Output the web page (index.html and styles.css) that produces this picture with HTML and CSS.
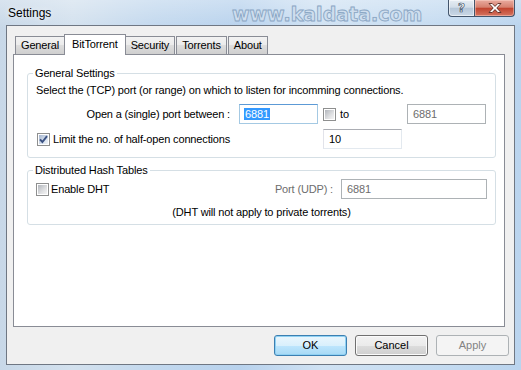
FILE: index.html
```html
<!DOCTYPE html>
<html lang="en">
<head>
<meta charset="UTF-8">
<meta name="viewport" content="width=device-width, initial-scale=1.0">
<link rel="stylesheet" href="styles.css">
<title>Settings</title>
</head>
<body>
  <div class="window">
    <div class="titlebar">
      <span class="title">Settings</span>
      <span class="watermark">www.kaldata.com</span>
      <div class="caption-buttons">
        <span class="cap-btn help">?</span>
        <span class="cap-btn close">
          <svg width="14" height="10" viewBox="0 0 14 10">
            <path d="M1 0.5h3.2L7 3.4 9.8 0.5H13L8.8 5 13 9.5H9.8L7 6.6 4.2 9.5H1L5.2 5Z" fill="#fff" stroke="#5a2a22" stroke-width="0.9" stroke-linejoin="round"/>
          </svg>
        </span>
      </div>
    </div>

    <div class="client">
      <div class="tabs">
        <div class="tab">General</div>
        <div class="tab active">BitTorrent</div>
        <div class="tab">Security</div>
        <div class="tab">Torrents</div>
        <div class="tab">About</div>
      </div>

      <div class="panel">
        <fieldset class="group">
          <legend>General Settings</legend>
          <p class="intro">Select the (TCP) port (or range) on which to listen for incomming connections.</p>
          <div class="port-grid">
            <div class="port-label">Open a (single) port between :</div>
            <div class="field focused"><span class="sel">6881</span></div>
            <div class="inline to-cell">
              <span class="check"></span>
              <span class="to">to</span>
            </div>
            <div class="field disabled">6881</div>

            <div class="inline limit-cell">
              <span class="check checked">
                <svg width="13" height="13" viewBox="0 0 13 13">
                  <path d="M3 6.3 5.4 9 10 3.2" fill="none" stroke="#3b5283" stroke-width="1.9"/>
                </svg>
              </span>
              <span>Limit the no. of half-open connections</span>
            </div>
            <div class="field half-open">10</div>
          </div>
        </fieldset>

        <fieldset class="group dht">
          <legend>Distributed Hash Tables</legend>
          <div class="inline dht-row">
            <span class="check"></span>
            <span>Enable DHT</span>
            <span class="udp-label">Port (UDP) :</span>
            <div class="field disabled udp">6881</div>
          </div>
          <p class="note">(DHT will not apply to private torrents)</p>
        </fieldset>
      </div>

      <div class="buttons">
        <div class="btn default">OK</div>
        <div class="btn">Cancel</div>
        <div class="btn disabled">Apply</div>
      </div>
    </div>
  </div>
</body>
</html>
```

FILE: styles.css
```css
body {
  margin: 0;
  font-family: "Liberation Sans", Arial, sans-serif;
  font-size: 11px;
  letter-spacing: -0.15px;
  color: #000;
}
.window {
  width: 521px;
  height: 370px;
  display: flex;
  flex-direction: column;
  background:
    linear-gradient(180deg, rgba(255, 255, 255, 0.3), rgba(255, 255, 255, 0) 28px),
    linear-gradient(90deg, #c8d8e8 0%, #d3e1ee 14%, #c2d8ee 30%, #b8d2ed 46%, #d0e2f3 62%, #c6dcf1 82%, #bad4ee 100%);
}
.titlebar {
  position: relative;
  height: 25px;
  flex: none;
  display: flex;
  justify-content: space-between;
  align-items: flex-start;
  padding: 0 6px 0 8px;
}
.title {
  margin-top: 6px;
  font-size: 12px;
  line-height: 14px;
  letter-spacing: 0;
  text-shadow: 0 0 6px rgba(255, 255, 255, 0.9);
}
.watermark {
  position: absolute;
  left: 232px;
  top: 5px;
  font-family: "DejaVu Sans", sans-serif;
  font-weight: bold;
  font-size: 19px;
  line-height: 19px;
  letter-spacing: 0;
  color: #cfdeee;
  -webkit-text-stroke: 0.8px #8aa6c4;
  text-shadow: 0 0 1px #9fb8d2;
}
.caption-buttons {
  display: flex;
  height: 17px;
}
.cap-btn {
  height: 17px;
  box-sizing: border-box;
  border: 1px solid #43556c;
  border-top: 0;
  display: flex;
  align-items: center;
  justify-content: center;
}
.help {
  width: 26px;
  border-right: 0;
  border-radius: 0 0 0 4px;
  background: linear-gradient(#e6edf4, #d2dde8 45%, #b6c7d9 52%, #cbd8e6);
  box-shadow: inset 0 0 0 1px rgba(255, 255, 255, 0.55);
  font-family: "DejaVu Sans", sans-serif;
  font-weight: bold;
  font-size: 12px;
  color: #fff;
  -webkit-text-stroke: 0.7px #3d4e63;
}
.close {
  width: 41px;
  border-radius: 0 0 4px 0;
  background: linear-gradient(#e9ab9f, #d6806f 45%, #c1442f 52%, #d57460);
  box-shadow: inset 0 0 0 1px rgba(255, 220, 210, 0.45);
}
.client {
  height: 340px;
  margin: 0 6px;
  box-sizing: border-box;
  border: 1px solid #6f7783;
  background: #f0f0f0;
  display: flex;
  flex-direction: column;
}

/* tabs */
.tabs {
  display: flex;
  align-items: flex-end;
  height: 20px;
  margin: 8px 0 0 8px;
}
.tab {
  height: 18px;
  box-sizing: border-box;
  padding: 0 5px;
  margin-right: 1px;
  line-height: 17px;
  border: 1px solid #898c95;
  border-bottom: 0;
  background: linear-gradient(#f2f2f2, #ebebeb 50%, #dddddd 50%, #cfcfcf);
}
.tab.active {
  position: relative;
  z-index: 1;
  height: 21px;
  margin: 0 -1px -1px -2px;
  padding: 1px 7px 0;
  line-height: 17px;
  background: #fff;
}
.panel {
  height: 273px;
  margin: 0 9px 0 6px;
  box-sizing: border-box;
  border: 1px solid #898c95;
  background: #fff;
  padding: 11px 8px 0 13px;
}

/* group boxes */
.group {
  margin: 0;
  padding: 3px 8px 8px;
  border: 1px solid #d5dfe5;
  border-radius: 3px;
}
.group legend {
  margin-left: -3px;
  padding: 0 2px;
  line-height: 14px;
}
.intro {
  margin: 0 0 7px;
  line-height: 14px;
}
.port-grid {
  display: grid;
  grid-template-columns: 203px 79px 5px 84px 79px;
  grid-template-rows: 20px 20px;
  row-gap: 5px;
}
.port-label {
  text-align: right;
  padding-right: 9px;
  line-height: 20px;
}
.to-cell {
  grid-column: 4;
}
.to {
  margin-left: 4px;
}
.limit-cell {
  grid-column: 1 / 4;
  padding-left: 1px;
}
.limit-cell .check {
  margin-right: 3px;
}
.half-open {
  grid-column: 4;
  width: 79px;
}
.inline {
  display: flex;
  align-items: center;
}

.dht {
  margin-top: 5px;
  padding: 2px 8px 5px;
}
.dht-row {
  height: 20px;
}
.dht-row .check {
  margin-right: 2px;
}
.udp-label {
  margin-left: auto;
  margin-right: 8px;
  color: #6d6d6d;
}
.note {
  margin: 6px 0 0;
  line-height: 14px;
  text-align: center;
}

/* controls */
.field {
  height: 20px;
  box-sizing: border-box;
  padding: 0 5px;
  line-height: 18px;
  border: 1px solid;
  border-color: #abadb3 #e3e9ef #e3e9ef #e2e3ea;
  background: #fff;
}
.field.focused {
  border-color: #5c9ad6 #a4c9e3 #a4c9e3 #a4c9e3;
}
.field.disabled {
  border-color: #adb2b5;
  color: #6d6d6d;
}
.field.udp {
  width: 146px;
}
.sel {
  background: #3399ff;
  color: #fff;
  padding: 0 1px;
  margin-left: -1px;
}
.check {
  width: 13px;
  height: 13px;
  flex: none;
  box-sizing: border-box;
  border: 1px solid #8e8f8f;
  padding: 1px;
  background: linear-gradient(135deg, #b2b6bc, #dfe0e2 60%, #f4f4f4) content-box, #fff;
  display: flex;
  align-items: center;
  justify-content: center;
}
.check svg {
  margin: -2px;
}
.check.checked {
  background: linear-gradient(135deg, #a5b5cf, #d8e2ee 60%, #f0f4f8) content-box, #fff;
}

/* dialog buttons */
.buttons {
  display: flex;
  justify-content: flex-end;
  gap: 8px;
  margin-top: 8px;
  padding-right: 5px;
}
.btn {
  width: 73px;
  height: 21px;
  box-sizing: border-box;
  border: 1px solid #707070;
  border-radius: 3px;
  background: linear-gradient(#f2f2f2, #ebebeb 50%, #dddddd 50%, #cfcfcf);
  box-shadow: inset 0 0 0 1px #fbfbfb;
  text-align: center;
  line-height: 19px;
  letter-spacing: 0;
}
.btn.default {
  border-color: #3c7fb1;
  background: linear-gradient(#eaf6fd, #d9f0fc 50%, #bee6fd 50%, #a7d9f5);
  box-shadow: inset 0 0 0 1px #8fd1f3;
}
.btn.disabled {
  border-color: #adb2b5;
  background: #f4f4f4;
  box-shadow: none;
  color: #838383;
}
```
